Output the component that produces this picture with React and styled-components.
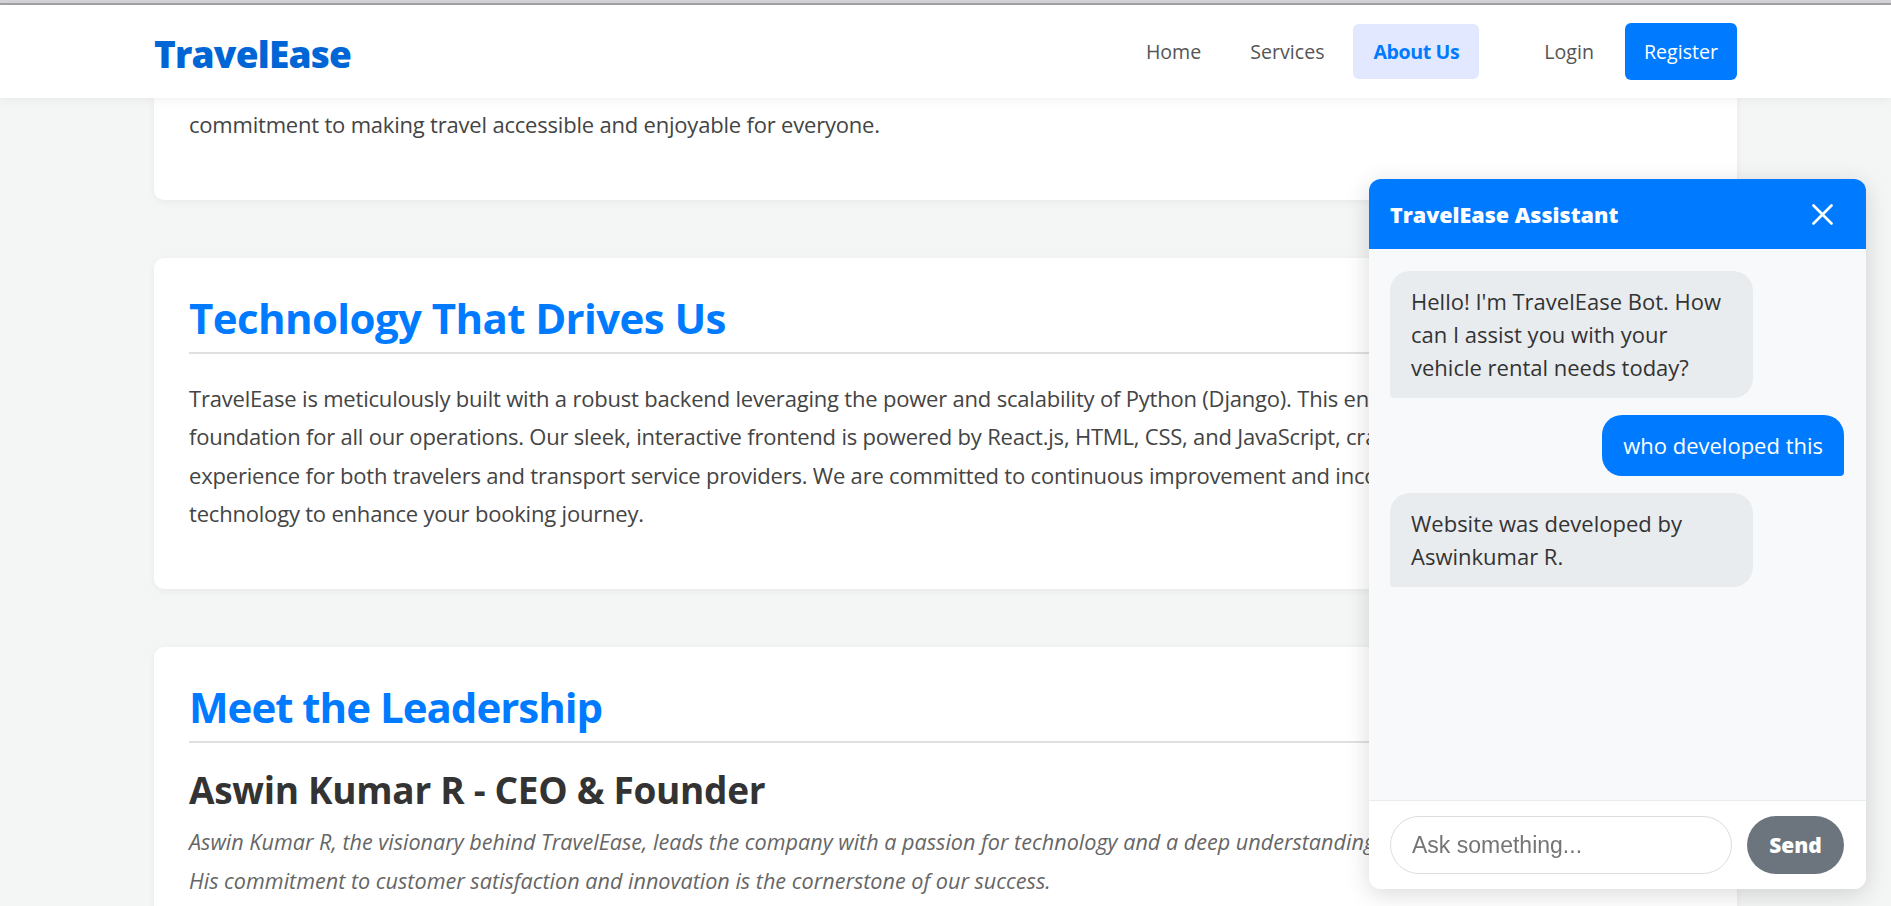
import React from 'react'
import styled, { createGlobalStyle } from 'styled-components'

const GlobalStyle = createGlobalStyle`
    * {
        box-sizing: border-box;
    }
    body {
        margin: 0;
        background: #f4f5f5;
        font-family: "Open Sans", "Noto Sans", sans-serif;
        color: #444;
        overflow: hidden;
    }
`

const BLUE = '#007bff'

export default function App() {
    return (
        <>
            <GlobalStyle />
            <TopStrip />
            <Navbar>
                <NavInner>
                    <Logo>TravelEase</Logo>
                    <NavRight>
                        <NavLinks>
                            <NavLink>Home</NavLink>
                            <NavLink>Services</NavLink>
                            <NavLink $active>About Us</NavLink>
                        </NavLinks>
                        <AuthLinks>
                            <NavLink>Login</NavLink>
                            <RegisterButton>Register</RegisterButton>
                        </AuthLinks>
                    </NavRight>
                </NavInner>
            </Navbar>

            <Main>
                <Card $tail>
                    <Paragraph>commitment to making travel accessible and enjoyable for everyone.</Paragraph>
                </Card>

                <Card>
                    <SectionTitle>Technology That Drives Us</SectionTitle>
                    <Paragraph>
                        TravelEase is meticulously built with a robust backend leveraging the power and scalability of Python (Django). This ensures a secure and reliable
                        <br />
                        foundation for all our operations. Our sleek, interactive frontend is powered by React.js, HTML, CSS, and JavaScript, crafting a seamless
                        <br />
                        experience for both travelers and transport service providers. We are committed to continuous improvement and incorporating the latest
                        <br />
                        technology to enhance your booking journey.
                    </Paragraph>
                </Card>

                <Card>
                    <SectionTitle $tight>Meet the Leadership</SectionTitle>
                    <LeaderName>Aswin Kumar R - CEO &amp; Founder</LeaderName>
                    <LeaderBio>
                        Aswin Kumar R, the visionary behind TravelEase, leads the company with a passion for technology and a deep understanding of travel.
                        <br />
                        His commitment to customer satisfaction and innovation is the cornerstone of our success.
                    </LeaderBio>
                </Card>
            </Main>

            <ChatWidget>
                <ChatHeader>
                    <ChatTitle>TravelEase Assistant</ChatTitle>
                    <CloseButton aria-label="Close">
                        <svg width="21" height="21" viewBox="0 0 21 21" fill="none">
                            <path d="M1.5 1.5 19.5 19.5M19.5 1.5 1.5 19.5" stroke="#fff" strokeWidth="2.6" strokeLinecap="round" />
                        </svg>
                    </CloseButton>
                </ChatHeader>
                <Messages>
                    <Bubble>Hello! I'm TravelEase Bot. How can I assist you with your vehicle rental needs today?</Bubble>
                    <Bubble $user>who developed this</Bubble>
                    <Bubble>Website was developed by Aswinkumar R.</Bubble>
                </Messages>
                <InputRow>
                    <ChatInput placeholder="Ask something..." />
                    <SendButton>Send</SendButton>
                </InputRow>
            </ChatWidget>
        </>
    )
}

const TopStrip = styled.div`
    height: 5px;
    background: #d4d4d8;
    border-bottom: 2px solid #a0a0a5;
`

const Navbar = styled.header`
    position: relative;
    z-index: 2;
    height: 93px;
    background: #fff;
    box-shadow: 0 2px 10px rgba(0, 0, 0, 0.06);
`

const NavInner = styled.div`
    max-width: 1583px;
    height: 100%;
    margin: 0 auto;
    display: flex;
    align-items: center;
    justify-content: space-between;
`

const Logo = styled.div`
    font-size: 37px;
    font-weight: 800;
    color: #0066d6;
    letter-spacing: -0.8px;
    margin-top: 4px;
`

const NavRight = styled.nav`
    display: flex;
    align-items: center;
`

const NavLinks = styled.div`
    display: flex;
    align-items: center;
    gap: 9px;
`

const AuthLinks = styled.div`
    display: flex;
    align-items: center;
    gap: 11px;
    margin-left: 45px;
`

const NavLink = styled.a`
    display: block;
    padding: 14px 20px;
    border-radius: 6px;
    font-size: 19.6px;
    line-height: 27px;
    color: ${({ $active }) => ($active ? BLUE : '#555')};
    font-weight: ${({ $active }) => ($active ? 700 : 400)};
    background: ${({ $active }) => ($active ? '#e2e8ff' : 'transparent')};
    letter-spacing: ${({ $active }) => ($active ? '-0.4px' : '0')};
    cursor: pointer;
`

const RegisterButton = styled.a`
    display: block;
    padding: 15px 19px;
    border-radius: 6px;
    font-size: 19.6px;
    line-height: 27px;
    color: #fff;
    background: ${BLUE};
    cursor: pointer;
`

const Main = styled.main`
    max-width: 1583px;
    margin: 0 auto;
    display: flex;
    flex-direction: column;
    gap: 58px;
`

const Card = styled.section`
    background: #fff;
    border-radius: ${({ $tail }) => ($tail ? '0 0 10px 10px' : '10px')};
    padding: ${({ $tail }) => ($tail ? '7px 35px 35px' : '35px')};
    box-shadow: 0 2px 8px rgba(0, 0, 0, 0.05);
`

const SectionTitle = styled.h2`
    margin: 0 0 25px;
    padding-bottom: 9px;
    border-bottom: 2px solid #e0e0e0;
    font-size: 42px;
    line-height: 50px;
    font-weight: 700;
    color: ${BLUE};
    letter-spacing: ${({ $tight }) => ($tight ? '-1px' : '-0.6px')};
`

const Paragraph = styled.p`
    margin: 0 0 21px;
    font-size: 22px;
    line-height: 38.5px;
    color: #444;
    letter-spacing: -0.2px;
    white-space: nowrap;
`

const LeaderName = styled.h3`
    margin: 22px 0 10px;
    font-size: 37px;
    line-height: 44px;
    font-weight: 700;
    color: #333;
    letter-spacing: -0.3px;
`

const LeaderBio = styled.p`
    margin: 0;
    font-size: 21.6px;
    line-height: 39px;
    font-style: italic;
    color: #666;
    white-space: nowrap;
`

const ChatWidget = styled.aside`
    position: fixed;
    right: 25px;
    bottom: 17px;
    z-index: 5;
    width: 497px;
    height: 710px;
    display: flex;
    flex-direction: column;
    background: #fff;
    border-radius: 12px;
    overflow: hidden;
    box-shadow: 0 5px 25px rgba(0, 0, 0, 0.15);
`

const ChatHeader = styled.div`
    height: 70px;
    flex-shrink: 0;
    display: flex;
    align-items: center;
    justify-content: space-between;
    padding: 0 33px 0 21px;
    background: ${BLUE};
`

const ChatTitle = styled.div`
    font-size: 21.5px;
    font-weight: 800;
    color: #fff;
`

const CloseButton = styled.button`
    display: flex;
    padding: 0;
    border: none;
    background: none;
    cursor: pointer;
`

const Messages = styled.div`
    flex: 1;
    display: flex;
    flex-direction: column;
    gap: 17px;
    padding: 22px 22px 22px 21px;
    background: #f8f9fa;
`

const Bubble = styled.div`
    align-self: ${({ $user }) => ($user ? 'flex-end' : 'flex-start')};
    max-width: 80%;
    padding: 14px 21px;
    font-size: 22px;
    line-height: 33px;
    color: ${({ $user }) => ($user ? '#fff' : '#333')};
    background: ${({ $user }) => ($user ? BLUE : '#e9ecef')};
    border-radius: ${({ $user }) => ($user ? '20px 20px 4px 20px' : '20px 20px 20px 4px')};
`

const InputRow = styled.div`
    flex-shrink: 0;
    display: flex;
    gap: 15px;
    padding: 15px 22px 15px 21px;
    border-top: 1px solid #e9ecef;
    background: #fff;
`

const ChatInput = styled.input`
    flex: 1;
    min-width: 0;
    height: 58px;
    padding: 0 21px;
    border: 1px solid #ddd;
    border-radius: 29px;
    font-family: "Liberation Sans", Arial, sans-serif;
    font-size: 23px;
    outline: none;

    &::placeholder {
        color: #757575;
    }
`

const SendButton = styled.button`
    width: 97px;
    height: 58px;
    border: none;
    border-radius: 29px;
    background: #6c757d;
    color: #fff;
    font-family: "Open Sans", sans-serif;
    font-size: 21px;
    font-weight: 800;
    cursor: pointer;
`
